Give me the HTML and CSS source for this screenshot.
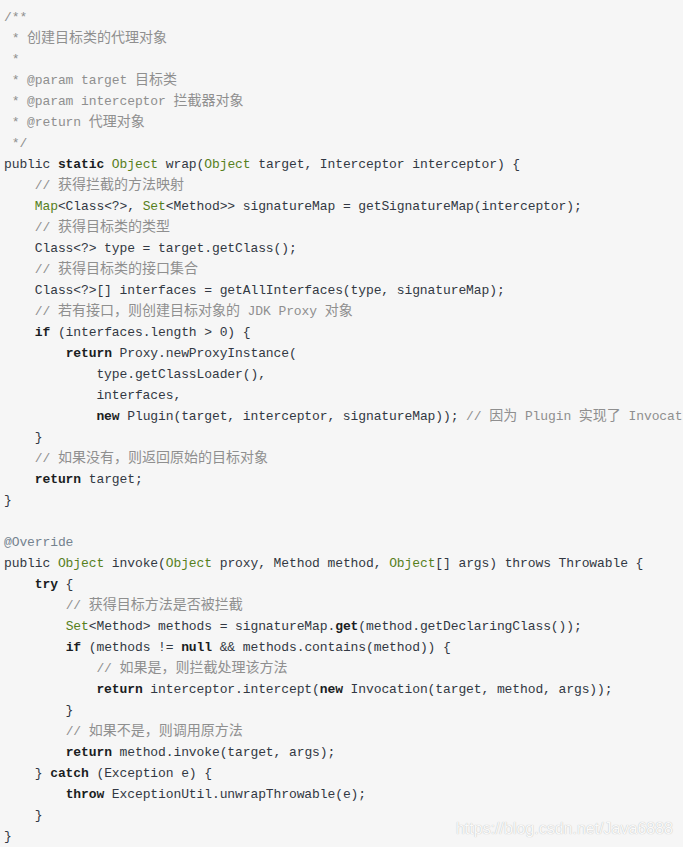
FILE: index.html
```html
<!DOCTYPE html>
<html lang="zh-CN">
<head>
<meta charset="utf-8">
<title>Plugin.wrap</title>
<link rel="stylesheet" href="styles.css">
</head>
<body>
<div class="code">
<pre class="src"><span class="c">/**</span>
<span class="c"> * <span class="zh">创建目标类的代理对象</span></span>
<span class="c"> *</span>
<span class="c"> * @param target <span class="zh">目标类</span></span>
<span class="c"> * @param interceptor <span class="zh">拦截器对象</span></span>
<span class="c"> * @return <span class="zh">代理对象</span></span>
<span class="c"> */</span>
public <span class="k">static</span> <span class="t">Object</span> wrap(<span class="t">Object</span> target, Interceptor interceptor) {
    <span class="c">// <span class="zh">获得拦截的方法映射</span></span>
    <span class="t">Map</span>&lt;Class&lt;?&gt;, <span class="t">Set</span>&lt;Method&gt;&gt; signatureMap = getSignatureMap(interceptor);
    <span class="c">// <span class="zh">获得目标类的类型</span></span>
    Class&lt;?&gt; type = target.getClass();
    <span class="c">// <span class="zh">获得目标类的接口集合</span></span>
    Class&lt;?&gt;[] interfaces = getAllInterfaces(type, signatureMap);
    <span class="c">// <span class="zh">若有接口，则创建目标对象的</span> JDK Proxy <span class="zh">对象</span></span>
    <span class="k">if</span> (interfaces.length &gt; 0) {
        <span class="k">return</span> Proxy.newProxyInstance(
            type.getClassLoader(),
            interfaces,
            <span class="k">new</span> Plugin(target, interceptor, signatureMap)); <span class="c">// <span class="zh">因为</span> Plugin <span class="zh">实现了</span> InvocationHandler <span class="zh">接口，所以可以作为</span> JDK <span class="zh">动态代理的调用处理器</span></span>
    }
    <span class="c">// <span class="zh">如果没有，则返回原始的目标对象</span></span>
    <span class="k">return</span> target;
}

<span class="m">@Override</span>
public <span class="t">Object</span> invoke(<span class="t">Object</span> proxy, Method method, <span class="t">Object</span>[] args) throws Throwable {
    <span class="k">try</span> {
        <span class="c">// <span class="zh">获得目标方法是否被拦截</span></span>
        <span class="t">Set</span>&lt;Method&gt; methods = signatureMap.<span class="k">get</span>(method.getDeclaringClass());
        <span class="k">if</span> (methods != <span class="k">null</span> &amp;&amp; methods.contains(method)) {
            <span class="c">// <span class="zh">如果是，则拦截处理该方法</span></span>
            <span class="k">return</span> interceptor.intercept(<span class="k">new</span> Invocation(target, method, args));
        }
        <span class="c">// <span class="zh">如果不是，则调用原方法</span></span>
        <span class="k">return</span> method.invoke(target, args);
    } <span class="k">catch</span> (Exception e) {
        <span class="k">throw</span> ExceptionUtil.unwrapThrowable(e);
    }
}</pre>
<div class="watermark">https://blog.csdn.net/Java6888</div>
</div>
</body>
</html>
```

FILE: styles.css
```css
html, body {
  margin: 0;
  padding: 0;
  overflow: hidden;
  background: #f6f6f6;
}

.code {
  position: relative;
  width: 683px;
  height: 847px;
  overflow: hidden;
  background: #f6f6f6;
}

.src {
  margin: 0;
  padding: 6.5px 4px 0 4px;
  font-family: "Liberation Mono", "DejaVu Sans Mono", monospace;
  font-size: 13px;
  letter-spacing: -0.1px;
  line-height: 21px;
  color: #323843;
  white-space: pre;
  overflow: hidden;
}

.zh {
  font-family: "Noto Sans CJK SC", "Noto Sans", sans-serif;
  font-size: 14px;
  line-height: 14px;
  letter-spacing: 0;
}

.c {
  color: #8f8f8f;
}

.k {
  color: #1a1d22;
  font-weight: bold;
}

.t {
  color: #56801c;
}

.m {
  color: #74828f;
}

.watermark {
  position: absolute;
  right: 10px;
  bottom: 9px;
  font-family: "Liberation Sans", Arial, sans-serif;
  font-size: 16px;
  line-height: 18px;
  color: #fafafa;
  text-shadow: 0 0 1px rgba(0, 0, 0, 0.3);
}
```
